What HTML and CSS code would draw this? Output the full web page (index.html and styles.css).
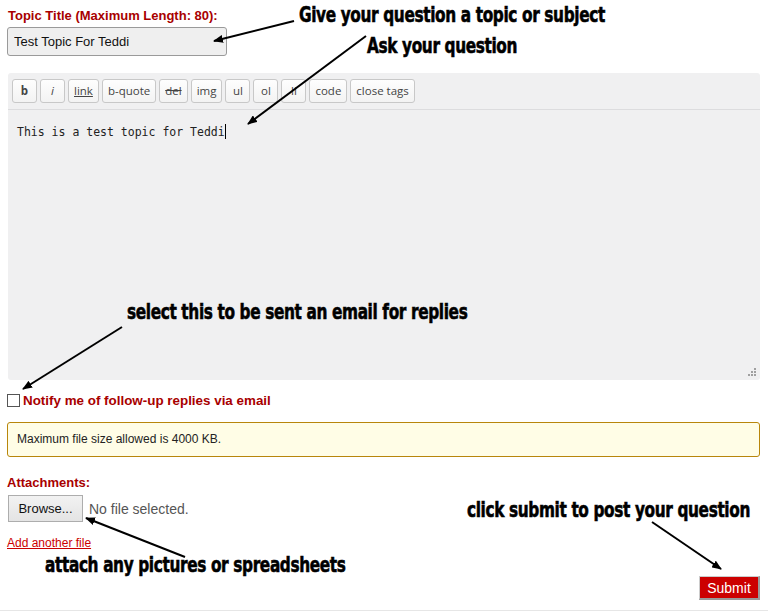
FILE: index.html
```html
<!DOCTYPE html>
<html lang="en">
<head>
<meta charset="UTF-8">
<title>New Topic</title>
<link rel="stylesheet" href="styles.css">
</head>
<body>
<div class="page">
  <form class="topic-form">
    <label class="field-label" for="title">Topic Title (Maximum Length: 80):</label>
    <input id="title" class="title-input" type="text" value="Test Topic For Teddi">

    <div class="editor">
      <div class="toolbar">
        <button type="button" class="qt b">b</button>
        <button type="button" class="qt i">i</button>
        <button type="button" class="qt u">link</button>
        <button type="button" class="qt">b-quote</button>
        <button type="button" class="qt s">del</button>
        <button type="button" class="qt">img</button>
        <button type="button" class="qt">ul</button>
        <button type="button" class="qt">ol</button>
        <button type="button" class="qt">li</button>
        <button type="button" class="qt">code</button>
        <button type="button" class="qt">close tags</button>
      </div>
      <div class="text-area">This is a test topic for Teddi<span class="caret"></span></div>
      <svg class="grip" width="9" height="9" viewBox="0 0 9 9">
        <g fill="#a0a0a0">
          <rect x="6" y="0" width="2" height="2"/>
          <rect x="3" y="3" width="2" height="2"/><rect x="6" y="3" width="2" height="2"/>
          <rect x="0" y="6" width="2" height="2"/><rect x="3" y="6" width="2" height="2"/><rect x="6" y="6" width="2" height="2"/>
        </g>
      </svg>
    </div>

    <div class="notify">
      <span class="checkbox"></span>
      <span class="notify-label">Notify me of follow-up replies via email</span>
    </div>

    <div class="file-note">Maximum file size allowed is 4000 KB.</div>

    <div class="field-label attach-label">Attachments:</div>
    <div class="file-row">
      <button type="button" class="browse">Browse...</button>
      <span class="no-file">No file selected.</span>
    </div>
    <a class="add-file" href="#">Add another file</a>

    <div class="submit-row">
      <button type="button" class="submit">Submit</button>
    </div>
  </form>
  <div class="bottom-line"></div>

  <!-- annotations over the screenshot -->
  <svg class="arrows" width="768" height="612" viewBox="0 0 768 612">
    <defs>
      <marker id="head" markerWidth="10" markerHeight="8" refX="9" refY="4" orient="auto" markerUnits="userSpaceOnUse">
        <path d="M0,0 L10,4 L0,8 Z" fill="#000"/>
      </marker>
    </defs>
    <g stroke="#000" stroke-width="2" marker-end="url(#head)">
      <line x1="294" y1="21" x2="214" y2="41"/>
      <line x1="366" y1="36" x2="248" y2="124"/>
      <line x1="122" y1="327" x2="23" y2="389"/>
      <line x1="185" y1="557" x2="86" y2="518"/>
      <line x1="652" y1="522" x2="721" y2="569"/>
    </g>
  </svg>
  <span class="note n-topic">Give your question a topic or subject</span>
  <span class="note n-ask">Ask your question</span>
  <span class="note n-email">select this to be sent an email for replies</span>
  <span class="note n-attach">attach any pictures or spreadsheets</span>
  <span class="note n-submit">click submit to post your question</span>
</div>
</body>
</html>
```

FILE: styles.css
```css
:root{
  --red:#a80000;
  --panel:#f0f0f1;
}
body{margin:0;background:#fff;font-family:"Liberation Sans",Arial,sans-serif;}
.page{position:relative;width:768px;height:612px;overflow:hidden;}
.topic-form{padding:8px 8px 0 7px;display:flex;flex-direction:column;align-items:flex-start;}
.field-label{color:var(--red);font-weight:bold;font-size:13px;line-height:15px;margin-left:1px;}
.title-input{margin-top:4px;width:220px;height:29px;box-sizing:border-box;border:1px solid #9a9a9a;border-radius:3px;background:#efefef;font-family:"Liberation Sans",Arial,sans-serif;font-size:13px;padding:0 6px;color:#111;}

.editor{position:relative;margin-top:17px;margin-left:1px;width:752px;height:307px;background:var(--panel);border-radius:3px;display:flex;flex-direction:column;}
.toolbar{display:flex;gap:3px;padding:6px 4px 6px 4px;border-bottom:1px solid #dcdcde;}
.qt{height:24px;box-sizing:border-box;padding:0 5px;min-width:25px;border:1px solid #c8c8c8;border-radius:3px;background:linear-gradient(#fefefe,#f3f3f3);font-family:"Open Sans",sans-serif;font-size:11.5px;color:#444;line-height:20px;}
.qt.b{font-weight:bold;}
.qt.i{font-style:italic;}
.qt.u{text-decoration:underline;}
.qt.s{text-decoration:line-through;}
.text-area{padding:14px 9px;font-family:"DejaVu Sans Mono","Liberation Mono",monospace;font-size:11.5px;line-height:16px;color:#222;}
.caret{display:inline-block;width:1px;height:15px;background:#000;vertical-align:-3px;}
.grip{position:absolute;right:3px;bottom:3px;}

.notify{display:flex;align-items:center;margin-top:13px;}
.checkbox{width:11px;height:11px;border:1px solid #555;background:#fff;margin-right:3px;}
.notify-label{color:var(--red);font-weight:bold;font-size:13.4px;}

.file-note{margin-top:14px;width:753px;height:35px;box-sizing:border-box;border:1px solid #b8860b;border-radius:3px;background:#fffde6;padding:0 9px;font-size:12px;line-height:33px;color:#222;}

.attach-label{margin-top:18px;margin-left:0;}
.file-row{display:flex;align-items:center;margin-top:5px;margin-left:1px;}
.browse{height:27px;width:75px;border:1px solid #adadad;background:linear-gradient(#f2f2f2,#e4e4e4);font-family:"Liberation Sans",Arial,sans-serif;font-size:13px;color:#111;padding:0;}
.no-file{margin-left:6px;font-size:14px;color:#555;}
.add-file{margin-top:14px;color:#cc0000;font-size:12px;}
.submit-row{align-self:stretch;display:flex;justify-content:flex-end;margin-top:26px;}
.submit{height:24px;width:61px;border:none;border-right:2px solid #999;border-bottom:2px solid #999;border-top:1px solid #ccc;border-left:1px solid #ccc;background:#cc0000;color:#fff;font-family:"Liberation Sans",Arial,sans-serif;font-size:14px;padding:0;}
.bottom-line{position:absolute;left:0;right:0;top:610px;height:1px;background:#e6e6e6;}

.arrows{position:absolute;left:0;top:0;pointer-events:none;}
/* condensed poster lettering: DejaVu bold squeezed horizontally */
.note{position:absolute;display:block;font-family:"DejaVu Sans",sans-serif;font-weight:bold;font-size:21px;line-height:21px;color:#000;white-space:nowrap;letter-spacing:-0.5px;-webkit-text-stroke:0.6px #000;transform:scaleX(0.73);transform-origin:0 50%;}
.n-topic{left:299px;top:5px;}
.n-ask{left:367px;top:36px;}
.n-email{left:127px;top:302px;}
.n-attach{left:45px;top:555px;}
.n-submit{left:467px;top:500px;}
```
